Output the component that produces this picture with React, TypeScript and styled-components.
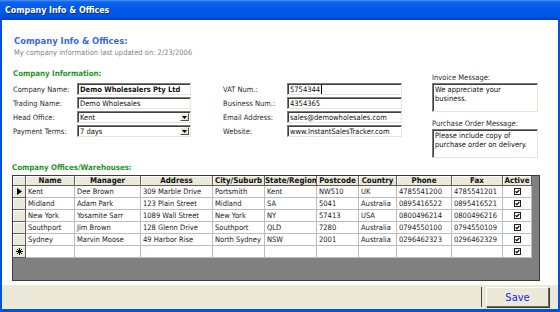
import React from 'react'
import styled, { createGlobalStyle } from 'styled-components'

const FONT = `"DejaVu Sans Condensed", "DejaVu Sans", "Liberation Sans", sans-serif`

const GlobalStyle = createGlobalStyle`
  html, body { margin: 0; padding: 0; background: #fff; }
  body { font-family: ${FONT}; }
  * { box-sizing: border-box; }
`

const Window = styled.div`
    width: 560px;
    height: 312px;
    display: flex;
    flex-direction: column;
    background: #0053e1;
    overflow: hidden;
`
const TitleBar = styled.div`
    height: 20px;
    flex: none;
    display: flex;
    align-items: center;
    padding-left: 5px;
    background: linear-gradient(to bottom, #4a94f7 0%, #0f63ea 10%, #0058e8 45%, #0054e3 80%, #0042c8 100%);
    color: #fff;
    font-weight: bold;
    font-size: 8.8px;
    text-shadow: 1px 1px 0 #0b2d8f;
`
const Client = styled.div`
    flex: 1;
    display: flex;
    flex-direction: column;
    margin: 0 2px 3px 2px;
`
const Body = styled.div`
    flex: 1;
    background: #fff;
    display: flex;
    flex-direction: column;
    padding: 15px 0 0 10px;
`
const Heading = styled.div`
    margin-left: 2px;
    height: 12px;
    line-height: 12px;
    font-size: 9.3px;
    font-weight: bold;
    color: #3a68ee;
`
const SubTitle = styled.div`
    margin: 1px 0 0 2px;
    height: 10px;
    line-height: 10px;
    font-size: 7.5px;
    color: #858585;
`
const InfoSection = styled.div`
    margin: 10px 0 0 1px;
    display: flex;
    align-items: flex-start;
`
const LeftPart = styled.div`
    display: flex;
    flex-direction: column;
`
const SectionTitle = styled.div<{ $top?: number }>`
    margin-top: ${p => p.$top || 0}px;
    height: 12px;
    line-height: 12px;
    font-size: 7.8px;
    font-weight: bold;
    color: #1f951f;
`
const FieldGrid = styled.div`
    margin-top: 3px;
    display: grid;
    grid-template-columns: 64px 114px 32px 64px 115px;
    grid-auto-rows: 12px;
    row-gap: 2px;
`
const Label = styled.div`
    display: flex;
    align-items: center;
    font-size: 7.5px;
    color: #2b2b2b;
    white-space: nowrap;
`
const sunken = `
    background: #fff;
    border: 1px solid;
    border-color: #7b7b7b #e6e4dc #e6e4dc #7b7b7b;
    box-shadow: inset 1px 1px 0 #3f3f3f;
`
const Field = styled.div<{ $bold?: boolean }>`
    ${sunken}
    display: flex;
    align-items: center;
    padding-left: 2px;
    font-size: 7.5px;
    font-weight: ${p => p.$bold ? 'bold' : 'normal'};
    color: #111;
    white-space: nowrap;
    overflow: hidden;
`
const Caret = styled.span`
    display: inline-block;
    width: 1px;
    height: 9px;
    margin-left: 1px;
    background: #000;
`
const DropButton = styled.div`
    margin-left: auto;
    margin-right: 1px;
    width: 9px;
    height: 8px;
    flex: none;
    display: flex;
    align-items: center;
    justify-content: center;
    background: #ece9d8;
    border: 1px solid;
    border-color: #fff #505050 #505050 #fff;
`
const RightPart = styled.div`
    margin-left: 30px;
    width: 106px;
    display: flex;
    flex-direction: column;
`
const MsgLabel = styled.div<{ $top: number }>`
    margin-top: ${p => p.$top}px;
    height: 10px;
    line-height: 10px;
    font-size: 7.5px;
    color: #2b2b2b;
`
const MsgBox = styled.div`
    ${sunken}
    height: 29px;
    padding: 1px 2px;
    font-size: 7.5px;
    line-height: 9px;
    color: #111;
    white-space: pre-line;
`
const GridBox = styled.div`
    margin-top: 1px;
    width: 528px;
    height: 106px;
    background: #808080;
    border: 1px solid #3c3c3c;
    display: flex;
    flex-direction: column;
`
const GridRow = styled.div<{ $head?: boolean }>`
    display: grid;
    grid-template-columns: 13px 49px 66px 72px 52px 52px 42px 38px 55px 51px 29px;
    height: ${p => p.$head ? 10 : 12}px;
`
const HeadCell = styled.div`
    background: #ece9d8;
    border-right: 1px solid #5e5e5e;
    border-bottom: 1px solid #5e5e5e;
    box-shadow: inset 1px 1px 0 #fff;
    font-size: 7.9px;
    font-weight: bold;
    line-height: 9px;
    text-align: center;
    color: #111;
    white-space: nowrap;
    overflow: hidden;
`
const SelectorCell = styled.div`
    background: #ece9d8;
    border-right: 1px solid #5e5e5e;
    border-bottom: 1px solid #5e5e5e;
    box-shadow: inset 1px 1px 0 #fff;
    display: flex;
    align-items: center;
    justify-content: center;
`
const Cell = styled.div<{ $center?: boolean }>`
    background: #fff;
    border-right: 1px solid #bdbdbd;
    border-bottom: 1px solid #bdbdbd;
    display: flex;
    align-items: center;
    justify-content: ${p => p.$center ? 'center' : 'flex-start'};
    padding-left: ${p => p.$center ? 0 : 2}px;
    font-size: 7.5px;
    color: #1a1a1a;
    white-space: nowrap;
    overflow: hidden;
`
const Footer = styled.div`
    height: 24px;
    flex: none;
    background: #ece9d8;
    display: flex;
    justify-content: flex-end;
    align-items: flex-start;
    gap: 4px;
    padding: 2px 9px 0 0;
`
const Divider = styled.div`
    width: 1px;
    height: 20px;
    background: #4a4a4a;
`
const SaveButton = styled.button`
    width: 63px;
    height: 20px;
    padding: 0;
    background: #ece9d8;
    border: 1px solid;
    border-color: #fff #6a6a6a #6a6a6a #fff;
    box-shadow: 1px 1px 0 #3a3a3a;
    font-family: ${FONT};
    font-size: 11px;
    color: #1c1cf0;
`

const Check = () => (
    <svg width="7" height="7" viewBox="0 0 7 7">
        <rect x="0.5" y="0.5" width="6" height="6" fill="#fff" stroke="#1e1e1e" />
        <path d="M1.6 3.3 L2.9 4.7 L5.4 1.9" fill="none" stroke="#000" strokeWidth="1.2" />
    </svg>
)

const Arrow = () => (
    <svg width="5" height="3" viewBox="0 0 5 3">
        <polygon points="0,0 5,0 2.5,3" fill="#000" />
    </svg>
)

const RowPointer = () => (
    <svg width="5" height="7" viewBox="0 0 5 7">
        <polygon points="0,0 5,3.5 0,7" fill="#000" />
    </svg>
)

const NewRowStar = () => (
    <svg width="7" height="7" viewBox="0 0 7 7" stroke="#000" strokeWidth="1">
        <line x1="3.5" y1="0" x2="3.5" y2="7" />
        <line x1="0" y1="3.5" x2="7" y2="3.5" />
        <line x1="1" y1="1" x2="6" y2="6" />
        <line x1="6" y1="1" x2="1" y2="6" />
    </svg>
)

const columns = ['Name', 'Manager', 'Address', 'City/Suburb', 'State/Region', 'Postcode', 'Country', 'Phone', 'Fax', 'Active']

const offices = [
    { name: 'Kent', manager: 'Dee Brown', address: '309 Marble Drive', city: 'Portsmith', state: 'Kent', postcode: 'NW510', country: 'UK', phone: '4785541200', fax: '4785541201' },
    { name: 'Midland', manager: 'Adam Park', address: '123 Plain Street', city: 'Midland', state: 'SA', postcode: '5041', country: 'Australia', phone: '0895416522', fax: '0895416521' },
    { name: 'New York', manager: 'Yosamite Sarr', address: '1089 Wall Street', city: 'New York', state: 'NY', postcode: '57413', country: 'USA', phone: '0800496214', fax: '0800496216' },
    { name: 'Southport', manager: 'Jim Brown', address: '128 Glenn Drive', city: 'Southport', state: 'QLD', postcode: '7280', country: 'Australia', phone: '0794550100', fax: '0794550109' },
    { name: 'Sydney', manager: 'Marvin Moose', address: '49 Harbor Rise', city: 'North Sydney', state: 'NSW', postcode: '2001', country: 'Australia', phone: '0296462323', fax: '0296462329' },
]

const App = () => {
    return (
        <Window>
            <GlobalStyle />
            <TitleBar>Company Info &amp; Offices</TitleBar>
            <Client>
                <Body>
                    <Heading>Company Info &amp; Offices:</Heading>
                    <SubTitle>My company information last updated on: 2/23/2006</SubTitle>
                    <InfoSection>
                        <LeftPart>
                            <SectionTitle>Company Information:</SectionTitle>
                            <FieldGrid>
                                <Label>Company Name:</Label>
                                <Field $bold>Demo Wholesalers Pty Ltd</Field>
                                <div />
                                <Label>VAT Num.:</Label>
                                <Field>5754344<Caret /></Field>

                                <Label>Trading Name:</Label>
                                <Field>Demo Wholesales</Field>
                                <div />
                                <Label>Business Num.:</Label>
                                <Field>4354365</Field>

                                <Label>Head Office:</Label>
                                <Field>Kent<DropButton><Arrow /></DropButton></Field>
                                <div />
                                <Label>Email Address:</Label>
                                <Field>sales@demowholesales.com</Field>

                                <Label>Payment Terms:</Label>
                                <Field>7 days<DropButton><Arrow /></DropButton></Field>
                                <div />
                                <Label>Website:</Label>
                                <Field>www.InstantSalesTracker.com</Field>
                            </FieldGrid>
                        </LeftPart>
                        <RightPart>
                            <MsgLabel $top={5}>Invoice Message:</MsgLabel>
                            <MsgBox>{'We appreciate your\nbusiness.'}</MsgBox>
                            <MsgLabel $top={7}>Purchase Order Message:</MsgLabel>
                            <MsgBox>{'Please include copy of\npurchase order on delivery.'}</MsgBox>
                        </RightPart>
                    </InfoSection>
                    <SectionTitle $top={4}>Company Offices/Warehouses:</SectionTitle>
                    <GridBox>
                        <GridRow $head>
                            <HeadCell />
                            {columns.map(c => <HeadCell key={c}>{c}</HeadCell>)}
                        </GridRow>
                        {offices.map((o, i) => (
                            <GridRow key={o.name}>
                                <SelectorCell>{i === 0 && <RowPointer />}</SelectorCell>
                                <Cell>{o.name}</Cell>
                                <Cell>{o.manager}</Cell>
                                <Cell>{o.address}</Cell>
                                <Cell>{o.city}</Cell>
                                <Cell>{o.state}</Cell>
                                <Cell>{o.postcode}</Cell>
                                <Cell>{o.country}</Cell>
                                <Cell>{o.phone}</Cell>
                                <Cell>{o.fax}</Cell>
                                <Cell $center><Check /></Cell>
                            </GridRow>
                        ))}
                        <GridRow>
                            <SelectorCell><NewRowStar /></SelectorCell>
                            {columns.slice(0, 9).map(c => <Cell key={c} />)}
                            <Cell $center><Check /></Cell>
                        </GridRow>
                    </GridBox>
                </Body>
                <Footer>
                    <Divider />
                    <SaveButton>Save</SaveButton>
                </Footer>
            </Client>
        </Window>
    )
}

export default App
